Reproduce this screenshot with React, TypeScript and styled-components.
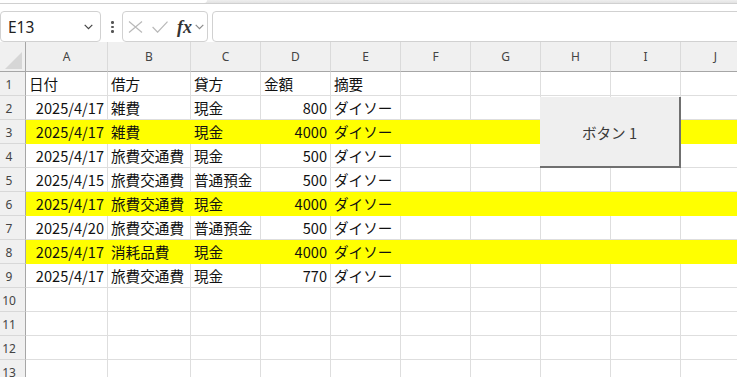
import React from 'react';
import styled, { createGlobalStyle } from 'styled-components';

const Global = createGlobalStyle`
  html, body { margin: 0; padding: 0; background: #ffffff; overflow: hidden; }
  #root { width: 737px; height: 377px; }
`;

const Page = styled.div`
  width: 737px;
  height: 377px;
  overflow: hidden;
  display: flex;
  flex-direction: column;
  background: #ffffff;
`;

const TopStrip = styled.div`
  height: 3px;
  flex: none;
  background: linear-gradient(#eeeeee, #e3e3e3);
  border-bottom: 1px solid #d0d0d0;
  display: flex;
`;

const RibbonTail = styled.div`
  width: 207px;
  height: 3px;
  background: #ffffff;
  border-bottom-right-radius: 5px;
`;

const Toolbar = styled.div`
  height: 38px;
  box-sizing: border-box;
  padding-top: 7px;
  flex: none;
  display: flex;
  align-items: flex-start;
  background: #ffffff;
`;

const Box = styled.div`
  height: 31px;
  box-sizing: border-box;
  border: 1px solid #d1d1d1;
  border-radius: 4px;
  background: #ffffff;
  display: flex;
  align-items: center;
`;

const NameBox = styled(Box)`
  width: 101px;
  padding: 0 7px 0 7px;
  justify-content: space-between;
  font-family: "Noto Sans", "DejaVu Sans", sans-serif;
  font-size: 15.5px;
  color: #222222;
`;

const Kebab = styled.div`
  width: 3px;
  margin: 0 8px 0 10px;
  align-self: center;
  display: flex;
  flex-direction: column;
  gap: 2px;
  padding-top: 1px;
`;

const Dot = styled.span`
  width: 2.5px;
  height: 2.5px;
  border-radius: 50%;
  background: #555555;
`;

const FxBox = styled(Box)`
  width: 86px;
  padding-left: 5px;
`;

const FxLabel = styled.span`
  font-family: "Liberation Serif", "DejaVu Serif", serif;
  font-style: italic;
  font-weight: 700;
  font-size: 18px;
  color: #333333;
  margin-left: 9px;
  letter-spacing: 0px;
  line-height: 1;
`;

const FormulaBox = styled(Box)`
  flex: 1;
  margin-left: 4px;
  margin-right: -8px;
`;

const Sheet = styled.div`
  position: relative;
  display: grid;
  grid-template-columns: 26px 82px 83px repeat(8, 70px);
  grid-template-rows: 30px repeat(13, 24px);
  width: 751px;
`;

const Corner = styled.div`
  background: #f0f0f0;
  border-right: 1px solid #a6a6a6;
  border-bottom: 1px solid #a6a6a6;
  box-sizing: border-box;
  display: flex;
  align-items: flex-end;
  justify-content: flex-end;
  padding: 0 3px 2px 0;
`;

const ColHeader = styled.div`
  background: #f0f0f0;
  border-right: 1px solid #dadada;
  border-bottom: 1px solid #a6a6a6;
  box-sizing: border-box;
  font-family: "Noto Sans", "DejaVu Sans", sans-serif;
  font-size: 12px;
  line-height: 29px;
  text-align: center;
  color: #444444;
`;

const RowHeader = styled.div`
  background: #f0f0f0;
  border-right: 1px solid #a6a6a6;
  border-bottom: 1px solid #d8d8d8;
  box-sizing: border-box;
  font-family: "Noto Sans", "DejaVu Sans", sans-serif;
  font-size: 12px;
  line-height: 21px;
  padding: 2px 7px 0 0;
  text-align: center;
  color: #444444;
`;

const Cell = styled.div<{ $right?: boolean; $fill?: boolean }>`
  box-sizing: border-box;
  background: ${(p) => (p.$fill ? '#ffff00' : '#ffffff')};
  border-right: 1px solid ${(p) => (p.$fill ? '#ffff00' : '#dedede')};
  border-bottom: 1px solid ${(p) => (p.$fill ? '#ffff00' : '#dedede')};
  font-family: "Noto Sans CJK JP", "Noto Sans", sans-serif;
  font-size: 14.6px;
  line-height: 23px;
  padding: 0 3px;
  text-align: ${(p) => (p.$right ? 'right' : 'left')};
  white-space: nowrap;
  overflow: visible;
  color: #111111;
`;

const SheetButton = styled.div`
  position: absolute;
  left: 540px;
  top: 55px;
  width: 141px;
  height: 71px;
  box-sizing: border-box;
  background: #efefef;
  border-right: 2px solid #707070;
  border-bottom: 2px solid #707070;
  display: flex;
  align-items: center;
  justify-content: center;
  font-family: "Noto Sans CJK JP", "Noto Sans", sans-serif;
  font-size: 14.6px;
  color: #3a3a3a;
  padding-top: 1px;
`;

const Chevron = ({ color, w = 9 }: { color: string; w?: number }) => (
  <svg width={w} height={6} viewBox="0 0 9 6">
    <path d="M0.7 0.8 L4.5 4.6 L8.3 0.8" fill="none" stroke={color} strokeWidth={1.2} />
  </svg>
);

const CrossIcon = () => (
  <svg width={15} height={12} viewBox="0 0 15 12">
    <path d="M1 0.5 L14 11.5 M14 0.5 L1 11.5" fill="none" stroke="#b9b9b9" strokeWidth={1.2} />
  </svg>
);

const CheckIcon = () => (
  <svg width={16} height={12} viewBox="0 0 16 12" style={{ marginLeft: 9 }}>
    <path d="M0.6 6 L5.6 11.2 L15.5 0.6" fill="none" stroke="#b9b9b9" strokeWidth={1.2} />
  </svg>
);

const SelectAll = () => (
  <svg width={17} height={17} viewBox="0 0 17 17">
    <polygon points="17,0 17,17 0,17" fill="#d6d6d6" />
  </svg>
);

type Row = [string, string, string, string, string] | null;

const rows: { data: Row; fill?: boolean }[] = [
  { data: ['日付', '借方', '貸方', '金額', '摘要'] },
  { data: ['2025/4/17', '雑費', '現金', '800', 'ダイソー'] },
  { data: ['2025/4/17', '雑費', '現金', '4000', 'ダイソー'], fill: true },
  { data: ['2025/4/17', '旅費交通費', '現金', '500', 'ダイソー'] },
  { data: ['2025/4/15', '旅費交通費', '普通預金', '500', 'ダイソー'] },
  { data: ['2025/4/17', '旅費交通費', '現金', '4000', 'ダイソー'], fill: true },
  { data: ['2025/4/20', '旅費交通費', '普通預金', '500', 'ダイソー'] },
  { data: ['2025/4/17', '消耗品費', '現金', '4000', 'ダイソー'], fill: true },
  { data: ['2025/4/17', '旅費交通費', '現金', '770', 'ダイソー'] },
  { data: null },
  { data: null },
  { data: null },
  { data: null },
];

const cols = ['A', 'B', 'C', 'D', 'E', 'F', 'G', 'H', 'I', 'J'];

const isRight = (r: number, c: number, v: string) =>
  r > 0 && (c === 0 || c === 3) && v !== '';

export default function App() {
  return (
    <Page>
      <Global />
      <TopStrip>
        <RibbonTail />
      </TopStrip>
      <Toolbar>
        <NameBox>
          <span>E13</span>
          <Chevron color="#444444" />
        </NameBox>
        <Kebab>
          <Dot />
          <Dot />
          <Dot />
        </Kebab>
        <FxBox>
          <CrossIcon />
          <CheckIcon />
          <FxLabel>fx</FxLabel>
          <span style={{ marginLeft: 3, display: 'flex' }}>
            <Chevron color="#8a8a8a" />
          </span>
        </FxBox>
        <FormulaBox />
      </Toolbar>
      <Sheet>
        <Corner>
          <SelectAll />
        </Corner>
        {cols.map((c) => (
          <ColHeader key={c}>{c}</ColHeader>
        ))}
        {rows.map((row, ri) => (
          <React.Fragment key={ri}>
            <RowHeader>{ri + 1}</RowHeader>
            {cols.map((_, ci) => {
              const v = row.data && ci < 5 ? row.data[ci] : '';
              return (
                <Cell key={ci} $fill={row.fill} $right={isRight(ri, ci, v)}>
                  {v}
                </Cell>
              );
            })}
          </React.Fragment>
        ))}
        <SheetButton>ボタン 1</SheetButton>
      </Sheet>
    </Page>
  );
}
